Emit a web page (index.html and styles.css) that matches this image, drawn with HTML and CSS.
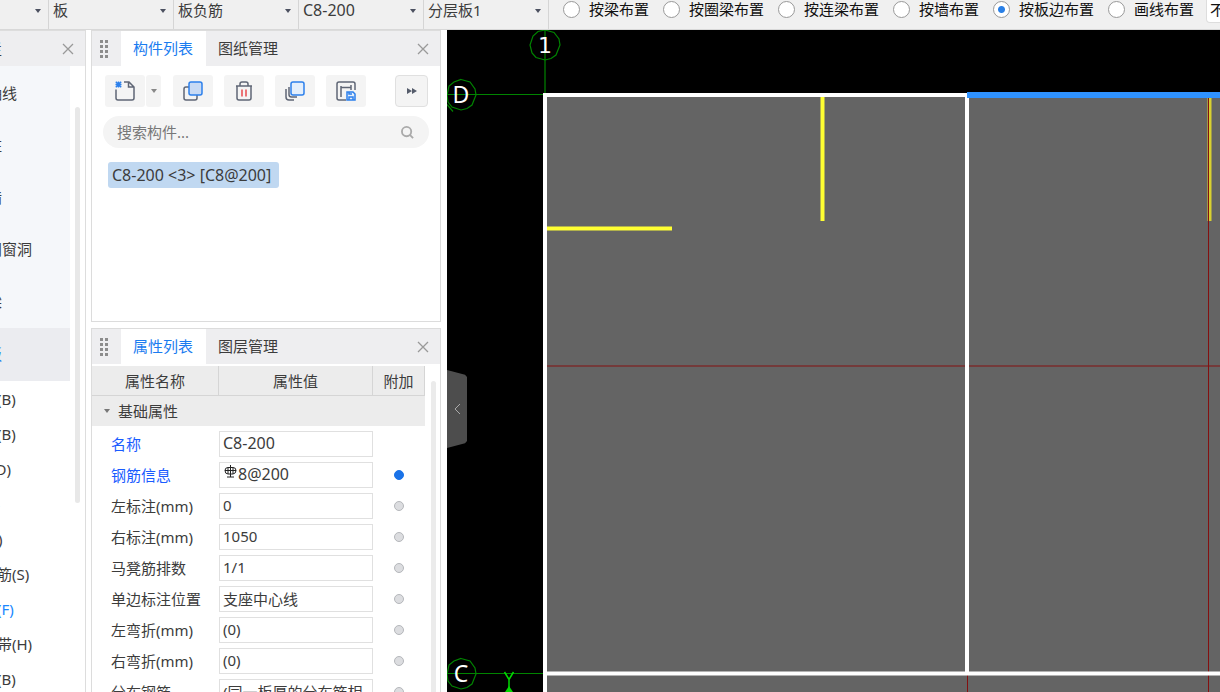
FILE: index.html
```html
<!DOCTYPE html>
<html lang="zh-CN">
<head>
<meta charset="utf-8">
<title>板负筋</title>
<link rel="stylesheet" href="styles.css">
</head>
<body>
<header class="topbar">
  <div class="combo combo-first"><select aria-label="楼层"><option></option></select></div>
  <div class="combo"><select aria-label="构件大类"><option>板</option></select></div>
  <div class="combo"><select aria-label="构件类型"><option>板负筋</option></select></div>
  <div class="combo"><select class="code" aria-label="构件名称"><option>C8-200</option></select></div>
  <div class="combo"><select aria-label="分层板"><option>分层板1</option></select></div>
  <form class="modes">
    <label><input type="radio" name="mode">按梁布置</label>
    <label><input type="radio" name="mode">按圈梁布置</label>
    <label><input type="radio" name="mode">按连梁布置</label>
    <label><input type="radio" name="mode">按墙布置</label>
    <label><input type="radio" name="mode" checked>按板边布置</label>
    <label><input type="radio" name="mode">画线布置</label>
    <select class="offset" aria-label="偏移方式"><option>不偏移</option></select>
  </form>
</header>
<div class="workspace">
  <nav class="nav">
    <div class="nav-head"><span class="nav-title">导航栏</span><button class="close" aria-label="关闭"><svg viewBox="0 0 12 12"><path d="M1 1L11 11M11 1L1 11"/></svg></button></div>
    <div class="nav-body">
      <div class="nav-list">
        <ul class="groups">
          <li>轴线</li><li>柱</li><li>墙</li><li>门窗洞</li><li>梁</li><li class="current">板</li>
        </ul>
        <ul class="items">
          <li>现浇板(B)</li><li>螺旋板(B)</li><li>坡道(PD)</li><li>柱帽(V)</li><li>板洞(N)</li><li>板受力筋(S)</li><li class="current">板负筋(F)</li><li>楼层板带(H)</li><li>空心板(B)</li>
        </ul>
      </div>
      <div class="nav-scroll"></div>
    </div>
  </nav>
  <div class="docks">
    <section class="panel list-panel">
      <div class="panel-head">
        <svg class="grip" viewBox="0 0 8 18"><path d="M0 0h3v3H0zM5 0h3v3H5zM0 5h3v3H0zM5 5h3v3H5zM0 10h3v3H0zM5 10h3v3H5zM0 15h3v3H0zM5 15h3v3H5z"/></svg>
        <button class="tab active">构件列表</button><button class="tab">图纸管理</button>
        <button class="close" aria-label="关闭"><svg viewBox="0 0 12 12"><path d="M1 1L11 11M11 1L1 11"/></svg></button>
      </div>
      <div class="tools">
        <div class="split">
          <button class="tool" aria-label="新建"><svg viewBox="0 0 20 20"><path class="ink" d="M1 8.500V17q0 2 2 2H17q2 0 2-2V6L14 1H9M13.500 1V6H19"/><path class="blue" d="M.8.800L6.200 6.200M6.200.8L.8 6.200M3.500.5V6.500M.5 3.500H6.500"/></svg></button>
          <button class="tool drop" aria-label="新建选项"><svg viewBox="0 0 6 4"><path d="M0 0H6L3 4Z"/></svg></button>
        </div>
        <button class="tool" aria-label="复制"><svg viewBox="0 0 20 20"><path class="ink" d="M6 6H3Q1 6 1 8V17q0 2 2 2H12q2 0 2-2V14"/><rect class="blue fill-mid" x="6" y="1" width="13" height="13" rx="2"/></svg></button>
        <button class="tool" aria-label="删除"><svg viewBox="0 0 20 20"><path class="ink" d="M2 5H18M6 5V3Q6 1 8 1H12q2 0 2 2V5M3 5V17q0 2 2 2H15q2 0 2-2V5"/><path class="red" d="M8 8.500V15.500M12 8.500V15.500"/></svg></button>
        <button class="tool" aria-label="层间复制"><svg viewBox="0 0 20 20"><path class="ink" d="M4 6V13.500Q4 16 6.500 16H12M1 8V16q0 3 3 3H9"/><rect class="blue fill-light" x="6" y="1" width="13" height="13" rx="2"/></svg></button>
        <button class="tool" aria-label="存档"><svg viewBox="0 0 20 20"><path class="ink" d="M10 19H3q-2 0-2-2V3Q1 1 3 1H17q2 0 2 2V9M5 5V16M15 4V9M5 6.500H15"/><path class="blue fill-light" d="M11 11H17L19 13V19H11ZM13 11V13H16M13 19V16H17V19"/></svg></button>
        <button class="tool more" aria-label="更多"><svg viewBox="0 0 10 6"><path d="M0 0L5 3L0 6ZM5 0L10 3L5 6Z"/></svg></button>
      </div>
      <div class="search">
        <input type="text" placeholder="搜索构件..." aria-label="搜索构件">
        <svg viewBox="0 0 14 14"><circle cx="6" cy="6" r="5"/><path d="M9.500 9.500L13 13"/></svg>
      </div>
      <button class="tree-item code">C8-200 &lt;3&gt; [C8@200]</button>
    </section>
    <section class="panel prop-panel">
      <div class="panel-head">
        <svg class="grip" viewBox="0 0 8 18"><path d="M0 0h3v3H0zM5 0h3v3H5zM0 5h3v3H0zM5 5h3v3H5zM0 10h3v3H0zM5 10h3v3H5zM0 15h3v3H0zM5 15h3v3H5z"/></svg>
        <button class="tab active">属性列表</button><button class="tab">图层管理</button>
        <button class="close" aria-label="关闭"><svg viewBox="0 0 12 12"><path d="M1 1L11 11M11 1L1 11"/></svg></button>
      </div>
      <div class="prop-body">
        <table class="props">
          <colgroup><col class="col-name"><col class="col-value"><col class="col-extra"></colgroup>
          <thead><tr><th>属性名称</th><th>属性值</th><th>附加</th></tr></thead>
          <tbody>
            <tr class="group"><td colspan="3"><svg viewBox="0 0 6 4"><path d="M0 0H6L3 4Z"/></svg>基础属性</td></tr>
            <tr class="key"><td><label for="p1">名称</label></td><td><input id="p1" class="code" type="text" value="C8-200"></td><td></td></tr>
            <tr class="key"><td><label for="p2">钢筋信息</label></td><td><div class="rebar"><svg viewBox="0 0 13 13"><path d="M6.500 0V12M3 12H10M4 2.500V9M9 2.500V9M1 5.500Q1 2.500 4 2.500H9Q12 2.500 12 5.500T9 9H4Q1 9 1 5.500M1 5.500H12"/></svg><input id="p2" class="code" type="text" value="8@200"></div></td><td><input type="checkbox" aria-label="附加钢筋信息" checked></td></tr>
            <tr><td><label for="p3">左标注(mm)</label></td><td><input id="p3" type="text" value="0"></td><td><input type="checkbox" aria-label="附加左标注"></td></tr>
            <tr><td><label for="p4">右标注(mm)</label></td><td><input id="p4" type="text" value="1050"></td><td><input type="checkbox" aria-label="附加右标注"></td></tr>
            <tr><td><label for="p5">马凳筋排数</label></td><td><input id="p5" type="text" value="1/1"></td><td><input type="checkbox" aria-label="附加马凳筋排数"></td></tr>
            <tr><td><label for="p6">单边标注位置</label></td><td><input id="p6" type="text" value="支座中心线"></td><td><input type="checkbox" aria-label="附加单边标注位置"></td></tr>
            <tr><td><label for="p7">左弯折(mm)</label></td><td><input id="p7" type="text" value="(0)"></td><td><input type="checkbox" aria-label="附加左弯折"></td></tr>
            <tr><td><label for="p8">右弯折(mm)</label></td><td><input id="p8" type="text" value="(0)"></td><td><input type="checkbox" aria-label="附加右弯折"></td></tr>
            <tr><td><label for="p9">分布钢筋</label></td><td><input id="p9" type="text" value="(同一板厚的分布筋相"></td><td><input type="checkbox" aria-label="附加分布钢筋"></td></tr>
          </tbody>
        </table>
        <div class="prop-scroll"></div>
      </div>
    </section>
  </div>
  <main class="canvas">
    <svg class="drawing" viewBox="447 30 773 662" preserveAspectRatio="xMinYMin slice">
      <rect class="slab" x="545" y="95" width="675" height="597"/>
      <path class="axis" d="M545 30V94M447 94.500H545M447 673.500H545"/>
      <path class="axis" d="M545 30L554 32.500L559 39L560 45L556 55L551 58.500L545 60L536 57.500L532 53L530 45L533 36L538 31.500Z"/>
      <path class="axis" d="M461 79.500L470 82L475 89L476 95L472 105L467 108.500L461 110L452 107L448 102L447 95L449 86L454 82ZM447 104.500L453 111.500"/>
      <path class="axis" d="M461 658.500L470 661L475 668L476 674L472 684L467 687.500L461 689L452 686L448 681L447 674L449 665L454 661Z"/>
      <path class="red-line" d="M547 366H1220M1208.500 97V692M967.500 675V692"/>
      <path class="bar" d="M822.500 97V221M547 228.500H672"/>
      <path class="wall" d="M545 692V93M543 95H967M967 95V673M545 673.500H1220"/>
      <path class="bar thin" d="M1209.500 97V221"/>
      <path class="red-line" d="M1208.500 97V221"/>
      <path class="edge" d="M967 95H1220"/>
      <text class="digit" x="545" y="53">1</text><text x="461" y="103">D</text><text x="461" y="682">C</text>
      <path class="ucs" d="M504.500 672L509 679.500L513.500 672M509 679.500V692"/><path class="ucs-tip" d="M505 692L509 686L513 692Z"/>
    </svg>
    <button class="handle" aria-label="收起"><svg viewBox="0 0 8 12"><path d="M7 1L2 6L7 11"/></svg></button>
  </main>
</div>
</body>
</html>
```
FILE: styles.css
```css
* { box-sizing: border-box; }
body {
  margin: 0;
  height: 100vh;
  display: flex;
  flex-direction: column;
  overflow: hidden;
  background: #fff;
  color: #3c3c3c;
  font: 15px/20px "Noto Sans", "Noto Sans CJK SC", sans-serif;
}
button, input, select { font: inherit; color: inherit; margin: 0; }
button { border: 0; padding: 0; background: none; }
ul { margin: 0; padding: 0; list-style: none; }
svg { display: block; fill: none; }
.code { font-size: 16px; }

.topbar {
  display: flex;
  height: 30px;
  background: #f0f0f0;
  border-bottom: 1px solid #d8d8d8;
  white-space: nowrap;
  overflow: hidden;
}
.combo {
  flex: none;
  width: 125px;
  border-right: 1px solid #d5d5d5;
  display: flex;
  align-items: center;
  position: relative;
}
.combo-first { width: 49px; }
.combo select {
  appearance: none;
  width: 100%;
  height: 20px;
  padding: 0 20px 0 4px;
  border: 0;
  background: transparent;
  margin-bottom: 9px;
}
.combo::after {
  content: "";
  position: absolute;
  right: 7px;
  top: 9px;
  border: 3px solid transparent;
  border-top: 4px solid #4c5160;
  border-bottom: 0;
}
.modes { display: flex; flex: 1; padding-left: 14px; gap: 14px; color: #111; }
.modes label { display: flex; height: 18px; align-items: center; gap: 9px; }
.modes input {
  appearance: none;
  width: 17px;
  height: 17px;
  border: 1px solid #999;
  border-radius: 50%;
  background: #fff;
}
.modes input:checked { background: radial-gradient(circle, #2a80e6 3px, #fff 4px); }
.offset {
  appearance: none;
  height: 23px;
  width: 90px;
  flex: none;
  padding: 0 3px 5px;
  border: 1px solid #ddd;
  border-top: 0;
  border-radius: 0 0 4px 4px;
  background: #fff;
  margin-left: -2px;
}

.workspace { display: flex; flex: 1; min-height: 0; }
.nav {
  flex: none;
  width: 86px;
  border-right: 1px solid #ddd;
  overflow: hidden;
  white-space: nowrap;
}
.nav-head {
  display: flex;
  justify-content: space-between;
  align-items: center;
  height: 36px;
  padding-right: 11px;
  background: #eeeef0;
  border-top: 1px solid #ddd;
}
.nav-title { margin-left: -43px; }
.close svg { width: 12px; height: 12px; stroke: #999; stroke-width: 1.3; }
.nav-body { display: flex; gap: 5px; }
.nav-list { width: 70px; }
.groups { padding-top: 2px; background: #f5f7fa; }
.groups li { height: 52px; line-height: 51px; text-indent: -13px; }
.groups .current { height: 53px; background: #ebecf0; color: #1a80f0; line-height: 53px; }
.items li { height: 35px; line-height: 36px; text-indent: -48px; }
.items .current { color: #1a88ff; }
.nav-scroll { width: 5px; height: 396px; margin-top: 41px; border-radius: 3px; background: #e8e8e8; }

.docks {
  flex: none;
  width: 361px;
  padding: 0 6px 0 5px;
  display: flex;
  flex-direction: column;
  gap: 6px;
}
.panel { border: 1px solid #dcdcdc; background: #fff; overflow: hidden; }
.list-panel { height: 292px; flex: none; }
.prop-panel { flex: 1; min-height: 0; border-bottom: 0; }
.panel-head {
  display: flex;
  align-items: center;
  height: 35px;
  background: #eeeef0;
  padding: 0 11px 0 8px;
}
.grip { width: 8px; height: 18px; margin-right: 13px; fill: #8c8c8c; }
.tab { height: 35px; padding: 0 13px 2px 12px; }
.tab.active { background: #fff; color: #1a7cf0; }
.panel-head .close { margin-left: auto; }

.tools { display: flex; gap: 11px; padding: 9px 12px 0 13px; }
.split { display: flex; gap: 1px; margin-right: 1px; }
.tool {
  width: 40px;
  height: 32px;
  display: flex;
  align-items: center;
  justify-content: center;
  border-radius: 3px;
  background: #f4f4f4;
}
.tool svg { width: 20px; height: 20px; }
.tool.drop { width: 15px; }
.drop svg { width: 6px; height: 4px; fill: #888; }
.tool.more { width: 33px; margin-left: auto; border: 1px solid #e0e0e0; border-radius: 4px; }
.more svg { width: 10px; height: 6px; fill: #555c6b; }
.ink { stroke: #5f6675; stroke-width: 1.5; }
.blue { stroke: #2c80ec; stroke-width: 1.5; }
.red { stroke: #e8484c; stroke-width: 1.5; }
.fill-mid { fill: #c8daf4; }
.fill-light { fill: #e4effc; }

.search {
  display: flex;
  align-items: center;
  height: 32px;
  margin: 9px 11px 14px;
  padding: 0 15px 0 14px;
  border-radius: 16px;
  background: #f4f4f4;
}
.search input { flex: 1; min-width: 0; border: 0; padding: 0; background: transparent; outline: 0; }
.search input::placeholder { color: #777; opacity: 1; }
.search svg { width: 13px; height: 13px; stroke: #aaa; stroke-width: 2; }
.tree-item {
  display: block;
  height: 26px;
  margin-left: 16px;
  padding: 0 8px 1px 4px;
  border-radius: 3px;
  background: #c0d8f1;
}

.prop-body { display: flex; gap: 6px; padding-top: 2px; }
.props { flex: 1; border-spacing: 0; table-layout: fixed; }
.col-name { width: 127px; }
.col-extra { width: 52px; }
.props th {
  height: 30px;
  padding: 0;
  font-weight: normal;
  background: #ececec;
  border-right: 1px solid #d5d5d5;
  border-bottom: 1px solid #d5d5d5;
}
.props td { height: 31px; padding: 0 0 0 19px; white-space: nowrap; }
.props td + td { padding: 0; }
.props td:last-child { text-align: center; }
.props .group td { height: 32px; padding: 0 0 2px 12px; text-align: left; background: linear-gradient(#ececec 30px, #fff 30px); }
.group svg { display: inline-block; width: 6px; height: 4px; margin-right: 8px; vertical-align: 4px; fill: #777; }
.key label { color: #1a5cff; }
.props input[type="text"] {
  display: block;
  width: 100%;
  height: 26px;
  padding: 0 3px 1px;
  border: 1px solid #e0e0e0;
  background: #fff;
}
.rebar { position: relative; }
.rebar svg { position: absolute; left: 5px; top: 3px; width: 13px; height: 13px; stroke: #222; }
.props .rebar input[type="text"] { padding: 0 3px 2px 18px; }
.props input[type="checkbox"] {
  appearance: none;
  display: block;
  width: 10px;
  height: 10px;
  margin: 0 auto;
  border: 1px solid #b5b7bb;
  border-radius: 50%;
  background: #dcdde0;
}
.props input[type="checkbox"]:checked { border-color: #1a73e8; background: #1a73e8; }
.prop-scroll { width: 5px; margin: 15px 4px 0 0; border-radius: 3px 3px 0 0; background: #ebebeb; }

.canvas { flex: 1; min-width: 0; position: relative; background: #000; overflow: hidden; }
.drawing { width: 100%; height: 100%; }
.slab { fill: #646464; }
.axis { stroke: #008400; stroke-width: 1.2; }
.red-line { stroke: #841010; }
.bar { stroke: #ffff32; stroke-width: 4; }
.bar.thin { stroke: #d8d030; }
.wall { stroke: #fff; stroke-width: 4; }
.edge { stroke: #2f92ff; stroke-width: 6; }
.drawing text { fill: #fff; font-size: 23px; text-anchor: middle; }
.drawing .digit { font-family: "DejaVu Sans", sans-serif; font-size: 22px; }
.ucs { stroke: #00d800; stroke-width: 1.5; }
.ucs-tip { fill: #00d800; }
.handle {
  position: absolute;
  left: 0;
  top: 340px;
  width: 20px;
  height: 78px;
  background: #4d4d4d;
  border-radius: 0 4px 4px 0;
  clip-path: polygon(0 0, 90% 6%, 100% 9%, 100% 91%, 90% 94%, 0 100%);
  display: flex;
  align-items: center;
  justify-content: center;
}
.handle svg { width: 8px; height: 12px; stroke: #aaa; }
```
